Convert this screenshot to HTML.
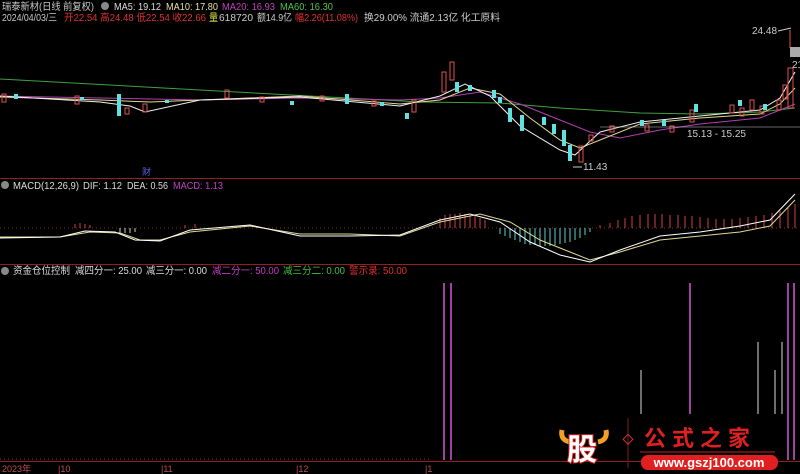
<!DOCTYPE html>
<html><head><meta charset="utf-8"><style>
body{margin:0;background:#000;width:800px;height:474px;overflow:hidden;font-family:"Liberation Sans","Noto Sans CJK SC",sans-serif}
svg{position:absolute;left:0;top:0}
</style></head><body>
<svg width="800" height="474" viewBox="0 0 800 474" font-family="Liberation Sans, Noto Sans CJK SC, sans-serif" font-size="10">
<text x="2" y="10" fill="#c8c8c8" textLength="92" lengthAdjust="spacingAndGlyphs">瑞泰新材(日线 前复权)</text>
<circle cx="105" cy="6" r="4" fill="#888"/>
<text x="114" y="10" fill="#ddd" textLength="47" lengthAdjust="spacingAndGlyphs">MA5: 19.12</text>
<text x="166" y="10" fill="#e8e0a0" textLength="52" lengthAdjust="spacingAndGlyphs">MA10: 17.80</text>
<text x="222" y="10" fill="#c040c0" textLength="53" lengthAdjust="spacingAndGlyphs">MA20: 16.93</text>
<text x="280" y="10" fill="#50c050" textLength="53" lengthAdjust="spacingAndGlyphs">MA60: 16.30</text>
<text x="2" y="21" fill="#c8c8c8" textLength="55" lengthAdjust="spacingAndGlyphs">2024/04/03/三</text>
<text x="64" y="21" fill="#e03030" textLength="142" lengthAdjust="spacingAndGlyphs">开22.54 高24.48 低22.54 收22.66</text>
<text x="209" y="21" fill="#e0e040" textLength="9" lengthAdjust="spacingAndGlyphs">量</text>
<text x="219" y="21" fill="#ccc" textLength="34" lengthAdjust="spacingAndGlyphs">618720</text>
<text x="257" y="21" fill="#ccc" textLength="35" lengthAdjust="spacingAndGlyphs">额14.9亿</text>
<text x="295" y="21" fill="#e03030" textLength="63" lengthAdjust="spacingAndGlyphs">幅2.26(11.08%)</text>
<text x="364" y="21" fill="#ccc" textLength="136" lengthAdjust="spacingAndGlyphs">换29.00% 流通2.13亿 化工原料</text>
<line x1="0" y1="178.5" x2="800" y2="178.5" stroke="#902020"/>
<line x1="0" y1="264.5" x2="800" y2="264.5" stroke="#902020"/>
<line x1="0" y1="461.5" x2="800" y2="461.5" stroke="#902020"/>
<polyline fill="none" stroke="#40a040" points="0,79 200,90 420,102 500,103 560,108 640,113 700,114 760,112 795,108"/>
<polyline fill="none" stroke="#b040b0" points="0,96 100,98 200,100 300,98 400,100 440,98 480,92 520,104 560,120 590,132 620,138 660,130 700,124 760,118 795,104"/>
<polyline fill="none" stroke="#e0d890" points="0,97 100,100 150,102 200,100 300,96 400,104 440,100 470,88 500,94 530,118 560,140 580,148 600,140 640,124 700,118 760,114 780,104 795,88"/>
<polyline fill="none" stroke="#f0f0f0" points="0,96 100,102 130,106 145,112 200,100 300,97 400,106 440,96 465,84 490,96 520,126 560,150 575,155 600,132 640,122 700,116 760,110 780,98 795,72"/>
<g stroke="#e05050" fill="none">
<rect x="442" y="72" width="4" height="20"/><rect x="450" y="62" width="4" height="18"/><rect x="579" y="146" width="4" height="16"/><rect x="589" y="135" width="4" height="6"/>
<rect x="777" y="100" width="4" height="10"/><rect x="783" y="85" width="4" height="14"/><rect x="788" y="68" width="5" height="40"/><line x1="790" y1="30" x2="790" y2="48"/>
<rect x="690" y="110" width="4" height="12"/><rect x="730" y="105" width="4" height="8"/><rect x="740" y="108" width="4" height="8"/><rect x="750" y="100" width="4" height="10"/><rect x="760" y="106" width="4" height="8"/>
<rect x="75" y="96" width="4" height="8"/><rect x="125" y="108" width="4" height="6"/><rect x="143" y="104" width="4" height="8"/><rect x="2" y="94" width="4" height="8"/><rect x="412" y="100" width="4" height="12"/>
<rect x="645" y="125" width="4" height="6"/><rect x="670" y="126" width="4" height="6"/><rect x="610" y="126" width="4" height="6"/>
<rect x="225" y="90" width="4" height="8"/><rect x="260" y="97" width="4" height="5"/><rect x="320" y="96" width="4" height="5"/><rect x="372" y="101" width="4" height="5"/>
</g>
<g fill="#60e0e0">
<rect x="455" y="82" width="4" height="10"/><rect x="468" y="85" width="4" height="6"/><rect x="492" y="90" width="4" height="8"/><rect x="498" y="97" width="4" height="6"/>
<rect x="508" y="108" width="4" height="14"/><rect x="520" y="115" width="4" height="16"/><rect x="542" y="117" width="4" height="8"/><rect x="552" y="124" width="4" height="10"/><rect x="562" y="130" width="4" height="16"/><rect x="568" y="145" width="4" height="16"/>
<rect x="117" y="94" width="4" height="22"/><rect x="345" y="94" width="4" height="10"/><rect x="405" y="113" width="4" height="6"/>
<rect x="640" y="120" width="4" height="6"/><rect x="662" y="120" width="4" height="6"/><rect x="694" y="104" width="4" height="8"/><rect x="738" y="100" width="4" height="6"/><rect x="763" y="104" width="4" height="6"/>
<rect x="14" y="94" width="4" height="5"/><rect x="80" y="97" width="4" height="3"/><rect x="165" y="100" width="4" height="3"/><rect x="290" y="101" width="4" height="4"/><rect x="380" y="102" width="4" height="4"/>
</g>
<rect x="790" y="47" width="10" height="10" fill="#aaa"/>
<text x="752" y="34" fill="#ccc">24.48</text><line x1="778" y1="31" x2="791" y2="28" stroke="#ccc"/>
<text x="792" y="68" fill="#ccc">21</text>
<text x="687" y="137" fill="#ccc">15.13 - 15.25</text><line x1="600" y1="127" x2="800" y2="127" stroke="#ccc" stroke-width=".6"/>
<text x="583" y="170" fill="#ccc">11.43</text><line x1="573" y1="167" x2="582" y2="167" stroke="#ccc"/>
<text x="142" y="175" fill="#5060e0" font-size="9">财</text>
<circle cx="5" cy="185" r="4" fill="#888"/>
<text x="13" y="189" fill="#ddd" textLength="66" lengthAdjust="spacingAndGlyphs">MACD(12,26,9)</text>
<text x="83" y="189" fill="#ddd" textLength="39" lengthAdjust="spacingAndGlyphs">DIF: 1.12</text>
<text x="127" y="189" fill="#ddd" textLength="41" lengthAdjust="spacingAndGlyphs">DEA: 0.56</text>
<text x="173" y="189" fill="#c040c0" textLength="50" lengthAdjust="spacingAndGlyphs">MACD: 1.13</text>
<line x1="0" y1="228" x2="800" y2="228" stroke="#803030" stroke-dasharray="1,3"/>
<g stroke="#d04040"><path d="M75 228v-4M80 228v-5M85 228v-4M90 228v-3M185 228v-3M195 228v-4M440 228v-10M445 228v-13M450 228v-14M455 228v-14M460 228v-15M465 228v-14M470 228v-13M475 228v-12M480 228v-10M485 228v-8M600 228v-3M610 228v-5M618 228v-8M625 228v-10M632 228v-12M640 228v-13M648 228v-14M655 228v-14M662 228v-14M670 228v-13M678 228v-13M685 228v-12M692 228v-12M700 228v-11M708 228v-10M716 228v-9M724 228v-9M732 228v-9M740 228v-10M748 228v-11M756 228v-12M764 228v-13M772 228v-15M780 228v-17M788 228v-20M795 228v-24"/></g>
<g stroke="#60d0d0"><path d="M500 228v6M505 228v8M510 228v10M515 228v12M520 228v14M525 228v16M530 228v17M535 228v17M540 228v18M545 228v18M550 228v18M555 228v17M560 228v16M565 228v15M570 228v14M575 228v12M580 228v10M585 228v7M590 228v4"/></g>
<g stroke="#ccc"><path d="M120 228v5M125 228v5M130 228v5M135 228v4"/></g>
<polyline fill="none" stroke="#e0d890" points="0,237 60,237 90,232 120,233 140,240 160,240 190,232 250,226 300,234 350,234 400,236 440,222 480,214 510,222 540,240 570,252 590,260 620,252 660,240 700,236 740,232 770,226 795,200"/>
<polyline fill="none" stroke="#fff" points="0,238 60,237 85,231 115,232 135,240 160,241 190,230 250,225 300,236 350,236 400,235 440,220 470,214 500,222 530,242 560,255 590,262 620,250 660,236 700,232 740,226 770,220 795,194"/>
<circle cx="5" cy="271" r="4" fill="#888"/>
<text x="13" y="274" fill="#ddd" textLength="57" lengthAdjust="spacingAndGlyphs">资金仓位控制</text>
<text x="75" y="274" fill="#ddd" textLength="67" lengthAdjust="spacingAndGlyphs">减四分一: 25.00</text>
<text x="146" y="274" fill="#ddd" textLength="61" lengthAdjust="spacingAndGlyphs">减三分一: 0.00</text>
<text x="212" y="274" fill="#c040c0" textLength="67" lengthAdjust="spacingAndGlyphs">减二分一: 50.00</text>
<text x="283" y="274" fill="#40c040" textLength="62" lengthAdjust="spacingAndGlyphs">减三分二: 0.00</text>
<text x="349" y="274" fill="#e03030" textLength="58" lengthAdjust="spacingAndGlyphs">警示录: 50.00</text>
<g stroke="#a040a0" stroke-width="2"><path d="M444 283V460M451 283V460M690 283V414M788 283V460M794 283V460"/></g>
<g stroke="#ddd"><path d="M641 370V414M758 342V414M775 370V414M782 342V414"/></g>
<line x1="0" y1="459" x2="430" y2="459" stroke="#803030" stroke-dasharray="1,3"/>
<text x="2" y="472" fill="#c05050" font-size="9">2023年</text>
<text x="58" y="472" fill="#c05050" font-size="9">|10</text>
<text x="161" y="472" fill="#c05050" font-size="9">|11</text>
<text x="296" y="472" fill="#c05050" font-size="9">|12</text>
<text x="425" y="472" fill="#c05050" font-size="9">|1</text>
<path d="M562 430q-2 10 8 12M606 430q2 10-8 12" stroke="#f0a020" stroke-width="5" fill="none"/>
<text x="567" y="460" fill="#fff" stroke="#d02020" stroke-width="2" paint-order="stroke" font-size="30" font-weight="bold">股</text>
<line x1="628" y1="418" x2="628" y2="468" stroke="#802020"/>
<rect x="624" y="436" width="7" height="7" transform="rotate(45 628 440)" fill="none" stroke="#d03030"/>
<text x="644" y="446" fill="#e02020" font-size="22" letter-spacing="6" font-weight="bold">公式之家</text>
<line x1="640" y1="452" x2="775" y2="452" stroke="#c02020"/>
<rect x="641" y="455" width="137" height="15" rx="7" fill="#e02020"/>
<text x="709" y="467" fill="#fff" font-size="13" font-weight="bold" text-anchor="middle">www.gszj100.com</text>
</svg>
</body></html>
